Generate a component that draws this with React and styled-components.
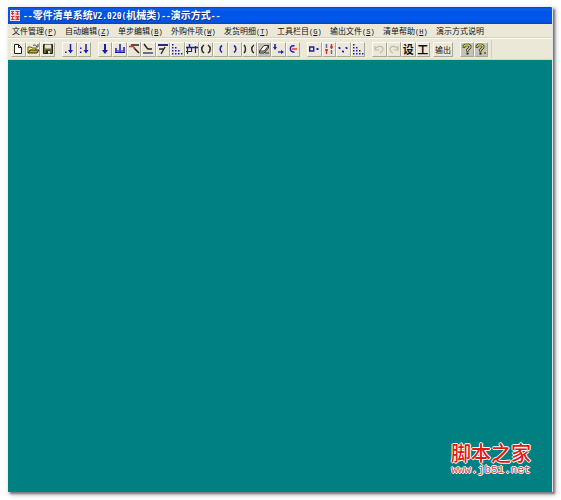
import React from 'react';
import styled, { createGlobalStyle } from 'styled-components';

const GlobalStyle = createGlobalStyle`
  * { box-sizing: border-box; }
  body {
    margin: 0;
    background: #fff;
    font-family: 'Liberation Sans', 'Noto Sans CJK SC', sans-serif;
  }
`;

const Page = styled.div`
  display: flex;
  height: 100vh;
  padding: 7px 8px 8px;
`;

const Window = styled.main`
  flex: 1;
  min-width: 0;
  display: flex;
  flex-direction: column;
  background: #ebe8d8;
  border-right: 1px solid #e4e4e0;
  box-shadow: 2px 2px 2px #777, 2px 2px 5px 1px #ccc;
`;

const TitleBar = styled.header`
  flex: none;
  display: flex;
  align-items: center;
  gap: 3px;
  height: 17px;
  padding-left: 2px;
  background: linear-gradient(#0645c2 0, #0a5fee 2px, #0054e6 5px, #0058ee 12px, #0350dc 15px, #0345b8 17px);
  border-radius: 1px 1px 0 0;
`;

const Title = styled.h1`
  margin: 0;
  color: #fff;
  font: bold 10px/16px 'Noto Sans CJK SC', sans-serif;
  white-space: nowrap;
  text-shadow: 1px 1px 0 #0a318c;
`;

const Latin = styled.span`
  font-family: 'DejaVu Sans Mono', monospace;
  font-size: 8px;
`;

const MenuBar = styled.nav`
  flex: none;
  display: flex;
  height: 14px;
  padding-left: 4px;
  border-bottom: 1px solid #d6d2c2;
`;

const MenuItem = styled.a`
  min-width: 53px;
  color: #111;
  font: 8px/14px 'Noto Sans CJK SC', sans-serif;
  text-decoration: none;
  white-space: nowrap;
`;

const Mnemonic = styled.span`
  font-family: 'Liberation Mono', monospace;
  font-size: 7px;
`;

const Toolbar = styled.div`
  flex: none;
  display: flex;
  align-items: center;
  gap: 7px;
  height: 22px;
  padding: 0 3px;
  border-top: 1px solid #fbfaf4;
  border-bottom: 1px solid #d8d5c4;
`;

const Group = styled.div`
  flex: none;
  width: ${(p) => p.$width}px;
  display: grid;
  grid-auto-flow: column;
  grid-auto-columns: 1fr;
  height: 15px;
`;

const GroupPair = styled.div`
  display: flex;
  gap: 3px;
`;

const ToolButton = styled.button`
  display: flex;
  align-items: center;
  justify-content: center;
  min-width: 0;
  padding: 0;
  overflow: hidden;
  border: 1px solid;
  border-color: #fbfaf4 #a9a698 #a9a698 #fbfaf4;
  background: ${(p) => (p.$pressed ? '#c5c3b8' : '#ebe8d8')};
  color: #111;
  font: ${(p) => (p.$large ? 'bold 11px' : '8px')}/13px 'Noto Sans CJK SC', sans-serif;
  white-space: nowrap;

  svg { flex: none; }
`;

const EndLine = styled.span`
  width: 1px;
  height: 18px;
  margin-left: -4px;
  background: #d2cfbf;
`;

const Workspace = styled.section`
  flex: 1;
  display: flex;
  align-items: flex-end;
  justify-content: flex-end;
  padding: 0 21px 16px;
  background: #008080;
`;

const Brand = styled.div`
  display: flex;
  flex-direction: column;
  align-items: center;
  gap: 2px;
  text-shadow: 1px 0 #fff, -1px 0 #fff, 0 1px #fff, 0 -1px #fff;
`;

const BrandName = styled.div`
  color: #e01818;
  font: 500 20px/20px 'Noto Sans CJK SC', sans-serif;
`;

const BrandSite = styled.div`
  color: #d84848;
  font: 11px/11px 'Liberation Mono', monospace;
`;

const BLUE = '#1a1ab4';
const RED = '#d83030';
const BLACK = '#202020';
const GREY = '#bdbaaa';

const stroke = (d, color, width = 1.5) => (
  <path d={d} fill="none" stroke={color} strokeWidth={width} />
);

const dots = (points, color = BLUE) =>
  points.map(([x, y]) => (
    <rect key={`${x}-${y}`} x={x} y={y} width="1.5" height="1.5" fill={color} />
  ));

const drawings = {
  page: <path d="M2.500 1.500h4l3 3v6h-7zM6.500 1.500v3h3" fill="#fff" stroke={BLACK} />,
  open: (
    <>
      <path d="M1 10V4h3l1 1h4v2" fill="#f2ea70" stroke="#5c5a20" />
      <path d="M1 10l2-3h9l-2 3z" fill="#b6a92c" stroke="#35330c" />
      <path d="M6 2.500c2-1 3 0 4 1M11 1v3H9" fill="none" stroke={BLACK} strokeWidth="0.8" />
    </>
  ),
  save: (
    <>
      <path d="M1.500 1.500h9v9h-9z" fill="#6a6a34" stroke={BLACK} />
      <path d="M3 1.500h6v4H3z" fill="#e6e4d0" />
      <path d="M4 7.500h4v3H4z" fill={BLACK} />
      <path d="M6 8h2v2.500H6z" fill="#ddd" />
    </>
  ),
  dotDown: (
    <>
      {stroke('M7.500 1v8', BLUE, 1.5)}
      <path d="M5 7h5L7.500 10.500z" fill={BLUE} />
      {dots([[2, 8.5]])}
    </>
  ),
  colonDown: (
    <>
      {stroke('M8 1v8', BLUE, 1.5)}
      <path d="M5.500 7h5L8 10.500z" fill={BLUE} />
      {dots([[2, 4.5], [2, 8.5]])}
    </>
  ),
  down: <path d="M5 1h2v6h2l-3 4-3-4h2z" fill={BLUE} />,
  bars: (
    <>
      {stroke('M2 5v5M6 1v9M10 4v6', BLUE, 1.5)}
      {stroke('M4 7v2M8 7v2M1 9.500h10', BLUE, 1.1)}
    </>
  ),
  redStep: (
    <>
      {stroke('M3 2h8M6 5l5 5', BLACK, 1.5)}
      {stroke('M1 3.500h4l2 2', RED, 1.5)}
    </>
  ),
  baseStep: (
    <>
      {stroke('M2 1l3 4 1 1h4', BLACK, 1.4)}
      {stroke('M1 10h10', '#353577', 1.4)}
    </>
  ),
  topStep: (
    <>
      {stroke('M1 2h10', '#151580', 1.8)}
      {stroke('M2 6h5M8 4L4 11', '#242448', 1.4)}
    </>
  ),
  staircase: dots([
    [1, 1], [1, 4], [4, 4], [1, 7], [4, 7], [7, 7], [1, 10], [4, 10], [7, 10], [10, 10],
  ]),
  frame: (
    <>
      {stroke('M3.500 1v3M0 4.500h12', BLUE, 1.4)}
      {stroke('M1.500 5v6M5.500 5v4M0 8.500h6M9.500 3v7', BLUE, 1.2)}
    </>
  ),
  parens: stroke('M4 2C1 4 1 8 4 10M8 2c3 2 3 6 0 8', '#242424', 1.5),
  leftParen: stroke('M7 2.500C4.500 4 4.500 8 7 9.500', BLUE, 1.5),
  rightParen: stroke('M5 2.500c2.500 1.500 2.500 5.500 0 7', BLUE, 1.5),
  outParens: stroke('M1 2c2 2 2 6 0 8M11 2C8 4 8 8 11 10', '#242424', 1.4),
  eraser: (
    <>
      <path d="M1.500 8L6 2.500h4.500L6.500 8z" fill="#f6f6ef" stroke={BLACK} strokeWidth="0.9" />
      {stroke('M1.500 8v2H6l4.500-5V2.500M7 10h4', BLACK, 0.9)}
    </>
  ),
  turn: (
    <>
      {stroke('M3 1v4', BLUE, 1.5)}
      <path d="M1 4h4L3 7z" fill={BLUE} />
      {stroke('M6 9h4', BLUE, 1.2)}
      <path d="M9 7l3 2-3 2z" fill={BLUE} />
    </>
  ),
  back: (
    <>
      {stroke('M7.500 3C2 1 2 10 7.500 9', BLUE, 1.5)}
      {stroke('M5 6h5', RED, 1.4)}
    </>
  ),
  boxDot: (
    <>
      {stroke('M1.700 4h4v4h-4z', BLUE, 1.4)}
      <rect x="8.500" y="5" width="2" height="2" fill={BLUE} />
    </>
  ),
  swap: (
    <>
      {stroke('M3.500 1v4M8.500 7v4', '#6262b8', 1.5)}
      {stroke('M3.500 6v5M8.500 1v5M2 7h3M7 4h3', RED, 1.4)}
    </>
  ),
  points: dots([[1.5, 4], [8.5, 4], [5, 7.5]].flatMap(([x, y]) => [[x, y], [x + 0.5, y + 0.5]])),
  undo: stroke('M2 3v4h4M2 6c3-4 8-3 8 0 0 2-1 3-3 4', GREY, 1.1),
  redo: stroke('M10 3v4H6M10 6C7 2 2 3 2 6c0 2 1 3 3 4', GREY, 1.1),
  help: (
    <>
      {stroke('M3 5V3l1.500-1h3L9 3v1.500L6.500 7v1.500', BLACK, 2.6)}
      {stroke('M3 4.500V3l1.500-1h3L9 3v1.500L6.500 7v1', '#dcd85c', 1.3)}
      <rect x="5.500" y="9.500" width="2" height="2" fill={BLACK} />
    </>
  ),
};

drawings.helpDot = (
  <>
    <g transform="translate(-1 0)">{drawings.help}</g>
    <rect x="9" y="9" width="2" height="2" fill="#77762c" />
  </>
);

const Tool = ({ name, label, pressed }) => (
  <ToolButton type="button" aria-label={label} $pressed={pressed}>
    <svg width="12" height="12" viewBox="0 0 12 12" aria-hidden="true">
      {drawings[name]}
    </svg>
  </ToolButton>
);

const groups = [
  { width: 44, tools: [['page', '新建'], ['open', '打开'], ['save', '保存']] },
  { width: 29, tools: [['dotDown', '下移'], ['colonDown', '全部下移']] },
  {
    width: 202,
    tools: [
      ['down', '向下'], ['bars', '序号'], ['redStep', '折线'], ['baseStep', '底线'],
      ['topStep', '顶线'], ['staircase', '排列'], ['frame', '框架'], ['parens', '括号'],
      ['leftParen', '左括号'], ['rightParen', '右括号'], ['outParens', '反括号'],
      ['eraser', '擦除', true], ['turn', '转移'], ['back', '返回'],
    ],
  },
  {
    width: 58,
    tools: [['boxDot', '单点'], ['swap', '交换'], ['points', '三点'], ['staircase', '递增']],
  },
];

const menus = [
  ['文件管理', 'P'], ['自动编辑', 'Z'], ['单步编辑', 'B'], ['外购件项', 'W'],
  ['发货明细', 'T'], ['工具栏目', 'G'], ['输出文件', 'S'], ['清单帮助', 'H'],
  ['演示方式说明'],
];

const AppIcon = () => (
  <svg width="10" height="11" viewBox="0 0 10 11" aria-hidden="true">
    <path d="M0 0h10v11H0z" fill="#f5ddd5" />
    <path
      d="M1 1.500h3M1 3.500h3M2.500 1v4M5.500 1.500h4M5.500 4h4M7.500 1v4M1 6.500h3.500M1 9.500h3.500M2.500 6v4M5.500 6.500h4M5.500 9.500h4M7.500 6v4M5.500 8h4"
      stroke="#c33b35"
      fill="none"
    />
  </svg>
);

const App = () => (
  <Page lang="zh-CN">
    <GlobalStyle />
    <Window>
      <TitleBar>
        <AppIcon />
        <Title>
          <Latin>--</Latin>零件清单系统<Latin>V2.020(</Latin>机械类<Latin>)--</Latin>
          演示方式<Latin>--</Latin>
        </Title>
      </TitleBar>
      <MenuBar>
        {menus.map(([label, key]) => (
          <MenuItem href="#" key={label}>
            {label}
            {key && <Mnemonic>(<u>{key}</u>)</Mnemonic>}
          </MenuItem>
        ))}
      </MenuBar>
      <Toolbar>
        {groups.map(({ width, tools }) => (
          <Group $width={width} key={width + tools[0][0]}>
            {tools.map(([name, label, pressed]) => (
              <Tool key={label} name={name} label={label} pressed={pressed} />
            ))}
          </Group>
        ))}
        <GroupPair>
          <Group $width={58}>
            <Tool name="undo" label="撤消" />
            <Tool name="redo" label="重做" />
            <ToolButton type="button" $large>设</ToolButton>
            <ToolButton type="button" $large>工</ToolButton>
          </Group>
          <Group $width={20}>
            <ToolButton type="button">输出</ToolButton>
          </Group>
        </GroupPair>
        <Group $width={28}>
          <Tool name="help" label="帮助" pressed />
          <Tool name="helpDot" label="关于" pressed />
        </Group>
        <EndLine />
      </Toolbar>
      <Workspace>
        <Brand>
          <BrandName>脚本之家</BrandName>
          <BrandSite>www.jb51.net</BrandSite>
        </Brand>
      </Workspace>
    </Window>
  </Page>
);

export default App;
